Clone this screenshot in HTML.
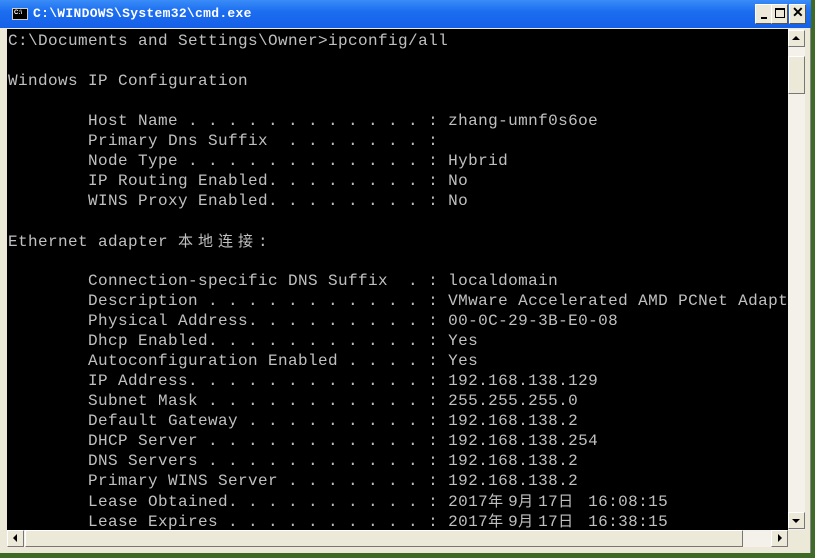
<!DOCTYPE html>
<html><head><meta charset="utf-8"><style>
*{margin:0;padding:0;box-sizing:border-box}
body{width:815px;height:558px;overflow:hidden;background:#3d6a24;position:relative;font-family:"Liberation Mono",monospace}
.win{position:absolute;left:0;top:0;width:811px;height:553px;background:#ece9d8;border-right:1px solid #888}
.title{position:absolute;left:0;top:0;width:811px;height:28px;background:linear-gradient(#3a8cf8,#1c6ef0 40%,#1560e8);}
.ttext{position:absolute;left:33px;top:6px;color:#fff;font:bold 13px "Liberation Mono",monospace;letter-spacing:0.3px}
.icon{position:absolute;left:12px;top:8px;width:16px;height:12px;background:#000;border:1px solid #ccc;color:#fff;font:bold 6px "Liberation Sans";line-height:9px;padding-left:1px}
.btn{position:absolute;top:4px;width:17px;height:20px;background:#ece9d8;border:1px solid;border-color:#fff #555 #555 #fff}
.con{position:absolute;left:7px;top:29px;width:781px;height:501px;background:#000;overflow:hidden}
.l{position:absolute;left:1px;white-space:pre;color:#c0c0c0;font-size:16px;letter-spacing:0.4px;line-height:20px;height:20px}
.c{display:inline-block;width:20px;font-family:"Noto Sans CJK SC",sans-serif;font-size:15px;letter-spacing:0}
.vs{position:absolute;left:788px;top:29px;width:17px;height:501px;background:#f3f1ea}
.hs{position:absolute;left:7px;top:530px;width:781px;height:17px;background:#f3f1ea}
.ab{position:absolute;width:17px;height:17px;background:#ece9d8;border:1px solid;border-color:#fff #777 #777 #fff}
.tri{position:absolute;width:0;height:0}
</style></head><body>
<div class="win">
<div class="title"><div class="icon">C:\</div><div class="ttext">C:\WINDOWS\System32\cmd.exe</div></div>
<div class="btn" style="left:755px"><div style="position:absolute;left:5px;top:12px;width:6px;height:2px;background:#000"></div></div>
<div class="btn" style="left:771px"><div style="position:absolute;left:3px;top:3px;width:10px;height:10px;border:1px solid #000;border-top-width:2px"></div></div>
<div class="btn" style="left:789px"><div style="position:absolute;left:2px;top:-1px;font:bold 14px 'Liberation Sans';color:#000">✕</div></div>
<div class="con">
<div class="l" style="top:2px">C:\Documents and Settings\Owner&gt;ipconfig/all</div>
<div class="l" style="top:42px">Windows IP Configuration</div>
<div class="l" style="top:82px">        Host Name . . . . . . . . . . . . : zhang-umnf0s6oe</div>
<div class="l" style="top:102px">        Primary Dns Suffix  . . . . . . . :</div>
<div class="l" style="top:122px">        Node Type . . . . . . . . . . . . : Hybrid</div>
<div class="l" style="top:142px">        IP Routing Enabled. . . . . . . . : No</div>
<div class="l" style="top:162px">        WINS Proxy Enabled. . . . . . . . : No</div>
<div class="l" style="top:202px">Ethernet adapter <span class="c">本</span><span class="c">地</span><span class="c">连</span><span class="c">接</span>:</div>
<div class="l" style="top:242px">        Connection-specific DNS Suffix  . : localdomain</div>
<div class="l" style="top:262px">        Description . . . . . . . . . . . : VMware Accelerated AMD PCNet Adapter</div>
<div class="l" style="top:282px">        Physical Address. . . . . . . . . : 00-0C-29-3B-E0-08</div>
<div class="l" style="top:302px">        Dhcp Enabled. . . . . . . . . . . : Yes</div>
<div class="l" style="top:322px">        Autoconfiguration Enabled . . . . : Yes</div>
<div class="l" style="top:342px">        IP Address. . . . . . . . . . . . : 192.168.138.129</div>
<div class="l" style="top:362px">        Subnet Mask . . . . . . . . . . . : 255.255.255.0</div>
<div class="l" style="top:382px">        Default Gateway . . . . . . . . . : 192.168.138.2</div>
<div class="l" style="top:402px">        DHCP Server . . . . . . . . . . . : 192.168.138.254</div>
<div class="l" style="top:422px">        DNS Servers . . . . . . . . . . . : 192.168.138.2</div>
<div class="l" style="top:442px">        Primary WINS Server . . . . . . . : 192.168.138.2</div>
<div class="l" style="top:462px">        Lease Obtained. . . . . . . . . . : 2017<span class="c">年</span>9<span class="c">月</span>17<span class="c">日</span> 16:08:15</div>
<div class="l" style="top:482px">        Lease Expires . . . . . . . . . . : 2017<span class="c">年</span>9<span class="c">月</span>17<span class="c">日</span> 16:38:15</div>
</div>
<div class="vs">
<div class="ab" style="left:0;top:1px"><div class="tri" style="left:3px;top:5px;border-left:4px solid transparent;border-right:4px solid transparent;border-bottom:4px solid #000"></div></div>
<div class="ab" style="left:0;top:27px;height:38px"></div>
<div class="ab" style="left:0;top:483px"><div class="tri" style="left:3px;top:6px;border-left:4px solid transparent;border-right:4px solid transparent;border-top:4px solid #000"></div></div>
</div>
<div class="hs">
<div class="ab" style="left:0;top:0"><div class="tri" style="left:5px;top:3px;border-top:4px solid transparent;border-bottom:4px solid transparent;border-right:4px solid #000"></div></div>
<div class="ab" style="left:18px;top:0;width:718px"></div>
<div class="ab" style="left:764px;top:0"><div class="tri" style="left:6px;top:3px;border-top:4px solid transparent;border-bottom:4px solid transparent;border-left:4px solid #000"></div></div>
</div>
</div>
</body></html>
